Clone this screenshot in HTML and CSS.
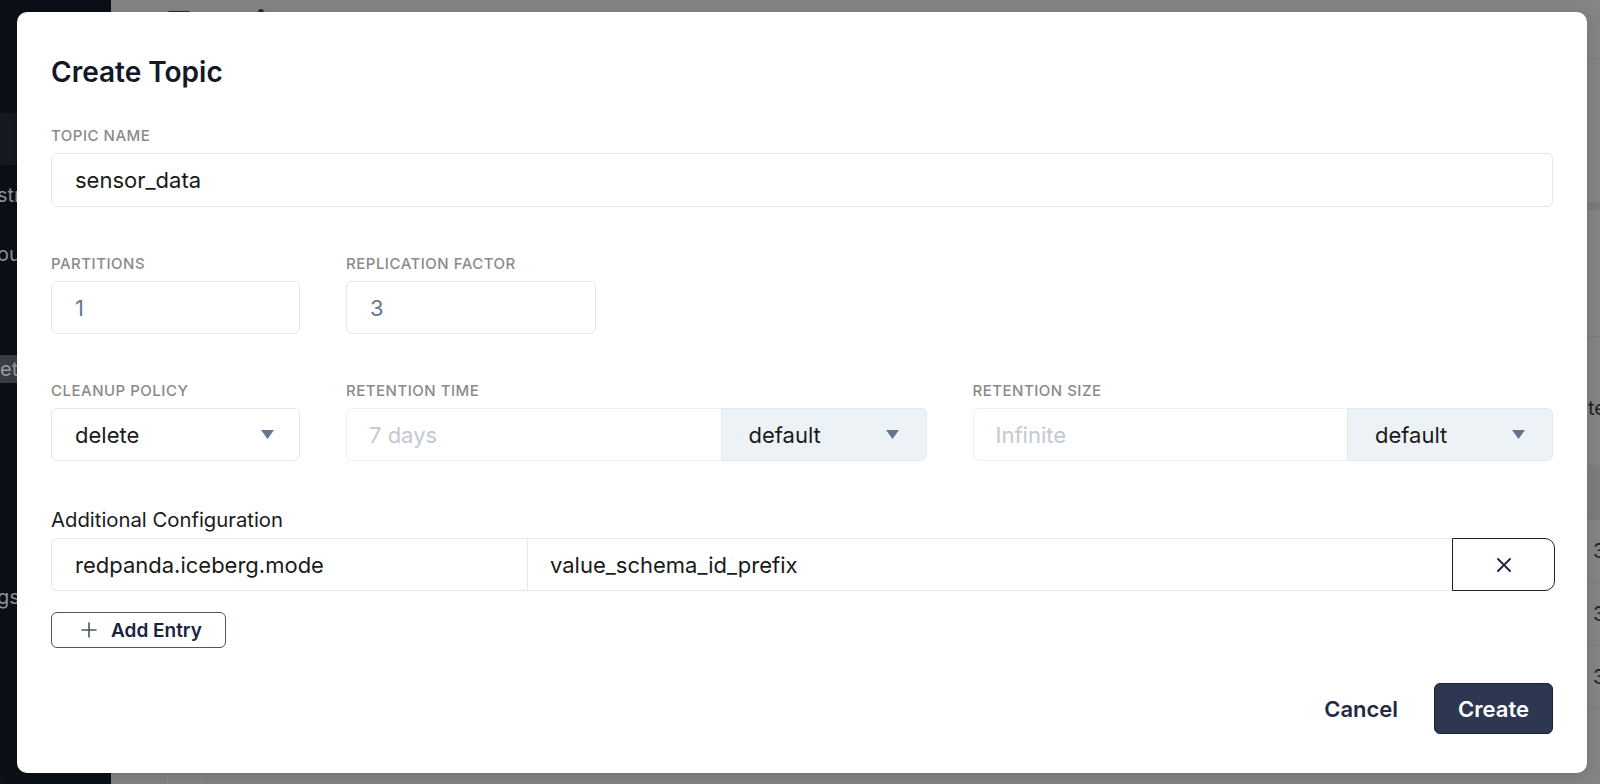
FILE: index.html
```html
<!DOCTYPE html>
<html lang="en">
<head>
    <meta charset="UTF-8">
    <meta name="viewport" content="width=device-width, initial-scale=1.0">
    <title>Create Topic</title>
    <link rel="stylesheet" href="styles.css">
</head>
<body>
    <div class="app">
        <aside class="sidebar">
            <div class="side-band"></div>
            <div class="side-item item-1">str</div>
            <div class="side-item item-2">ou</div>
            <div class="side-item item-3 active">et</div>
            <div class="side-item item-4">gs</div>
        </aside>
        <main class="main">
            <div class="topbar"><h1 class="page-title">Topics</h1></div>
            <div class="toolbar"></div>
            <div class="band"></div>
            <div class="stats"></div>
            <div class="search-row"><span class="edge-text">te</span></div>
            <div class="table-head"></div>
            <div class="table-row"><span class="edge-text">3</span></div>
            <div class="table-row"><span class="edge-text">3</span></div>
            <div class="table-row"><span class="edge-text">3</span></div>
            <div class="table-foot">
                <div class="col-line"></div>
                <div class="col-line"></div>
            </div>
        </main>
    </div>

    <div class="modal">
        <h2 class="modal-title">Create Topic</h2>

        <div class="field">
            <label class="field-label">TOPIC NAME</label>
            <div class="input input-tall">sensor_data</div>
        </div>

        <div class="row row-two">
            <div class="field">
                <label class="field-label">PARTITIONS</label>
                <div class="input muted">1</div>
            </div>
            <div class="field">
                <label class="field-label">REPLICATION FACTOR</label>
                <div class="input muted">3</div>
            </div>
        </div>

        <div class="row row-three">
            <div class="field">
                <label class="field-label">CLEANUP POLICY</label>
                <div class="input select">
                    <span>delete</span>
                    <svg class="caret" width="13" height="9" viewBox="0 0 13 9"><path d="M0 0h13L6.5 9z" fill="#64748b"/></svg>
                </div>
            </div>
            <div class="field">
                <label class="field-label">RETENTION TIME</label>
                <div class="group">
                    <div class="input group-input placeholder">7 days</div>
                    <div class="addon">
                        <span>default</span>
                        <svg class="caret" width="13" height="9" viewBox="0 0 13 9"><path d="M0 0h13L6.5 9z" fill="#64748b"/></svg>
                    </div>
                </div>
            </div>
            <div class="field">
                <label class="field-label">RETENTION SIZE</label>
                <div class="group">
                    <div class="input group-input placeholder">Infinite</div>
                    <div class="addon">
                        <span>default</span>
                        <svg class="caret" width="13" height="9" viewBox="0 0 13 9"><path d="M0 0h13L6.5 9z" fill="#64748b"/></svg>
                    </div>
                </div>
            </div>
        </div>

        <div class="field">
            <label class="config-label">Additional Configuration</label>
            <div class="config-row">
                <div class="input config-key">redpanda.iceberg.mode</div>
                <div class="input config-value">value_schema_id_prefix</div>
                <button class="remove-btn">
                    <svg width="14" height="14" viewBox="0 0 14 14"><path d="M1 1l12 12M13 1L1 13" stroke="#1a2340" stroke-width="1.8" stroke-linecap="round"/></svg>
                </button>
            </div>
        </div>

        <button class="add-btn">
            <svg width="16" height="16" viewBox="0 0 16 16"><path d="M8 1v14M1 8h14" stroke="#4a5568" stroke-width="1.6" stroke-linecap="round"/></svg>
            <span>Add Entry</span>
        </button>

        <div class="modal-footer">
            <button class="cancel-btn">Cancel</button>
            <button class="create-btn">Create</button>
        </div>
    </div>
</body>
</html>
```

FILE: styles.css
```css
body {
    margin: 0;
    font-family: Inter, "Noto Sans", sans-serif;
    background-color: #858585;
    overflow: hidden;
}
.app {
    display: flex;
    height: 784px;
}
.sidebar {
    width: 111px;
    flex-shrink: 0;
    background-color: #0b0f17;
    padding-top: 113px;
    box-sizing: border-box;
    color: #8f949c;
    font-size: 20px;
}
.side-band {
    height: 52px;
    background-color: #151921;
}
.side-item {
    height: 28px;
    line-height: 28px;
    margin-left: -3px;
}
.item-1 { margin-top: 16px; }
.item-2 { margin-top: 31px; }
.item-3 { margin-top: 87px; }
.item-4 { margin-top: 200px; }
.side-item.active {
    background-color: #3a3e45;
    width: 19px;
    padding-left: 3px;
    color: #9a9ea5;
}
.main {
    flex: 1;
    min-width: 0;
    overflow: hidden;
}
.topbar {
    height: 58px;
    border-bottom: 1px solid #7b7b7b;
    padding-left: 56px;
}
.page-title {
    margin: 0;
    padding-top: 2px;
    font-size: 36px;
    font-weight: 600;
    color: #2a2a2a;
    letter-spacing: 8px;
}
.toolbar {
    height: 143px;
}
.band {
    height: 8px;
    background-color: #7c7c7c;
}
.stats {
    height: 126px;
    border-bottom: 1px solid #7b7b7b;
}
.search-row,
.table-row {
    white-space: nowrap;
    overflow: hidden;
    color: #222;
    font-size: 20px;
}
.search-row {
    height: 128px;
    line-height: 142px;
    padding-left: 1477px;
}
.table-head {
    height: 54px;
    background-color: #7e7e7e;
    border-bottom: 1px solid #7b7b7b;
}
.table-row {
    height: 62px;
    line-height: 62px;
    border-bottom: 1px solid #7b7b7b;
    padding-left: 1482px;
}
.table-foot {
    display: flex;
    height: 100px;
    padding-left: 56px;
    gap: 33px;
}
.col-line {
    width: 1px;
    background-color: #8f8f8f;
}

/* modal */
.modal {
    position: absolute;
    left: 17px;
    top: 12px;
    width: 1570px;
    box-sizing: border-box;
    padding: 43px 34px 39px 34px;
    background-color: #fff;
    border-radius: 10px;
    box-shadow: 0 4px 18px rgba(0,0,0,0.15);
}
.modal-title {
    margin: 0 0 37px 0;
    font-size: 28px;
    line-height: 34px;
    font-weight: 600;
    color: #111827;
}
.field {
    display: flex;
    flex-direction: column;
}
.field-label {
    font-size: 15px;
    line-height: 20px;
    font-weight: 500;
    letter-spacing: 0.5px;
    color: #8a8a8a;
    margin-bottom: 7px;
}
.config-label {
    font-size: 20.3px;
    line-height: 24px;
    color: #1a1a1a;
    margin-bottom: 6px;
}
.row {
    display: grid;
    column-gap: 46px;
    margin-top: 47px;
}
.row-two {
    grid-template-columns: 249px 250px;
}
.row-three {
    grid-template-columns: 249px 1fr 1fr;
    margin-bottom: 47px;
}
.input {
    height: 53px;
    box-sizing: border-box;
    border: 1px solid #e2e8f0;
    border-radius: 6px;
    padding: 0 23px;
    display: flex;
    align-items: center;
    font-size: 22px;
    color: #1a1a1a;
}
.input-tall {
    height: 54px;
}
.muted {
    color: #667792;
}
.placeholder {
    color: #c3c9d3;
}
.select {
    justify-content: space-between;
    padding-right: 25px;
}
.group {
    display: flex;
}
.group-input {
    flex: 1;
    border-color: #eef1f5;
    border-right: none;
    border-radius: 6px 0 0 6px;
    padding-left: 22px;
}
.addon {
    width: 206px;
    height: 53px;
    box-sizing: border-box;
    background-color: #edf2f7;
    border: 1px solid #e2e8f0;
    border-radius: 0 6px 6px 0;
    padding: 0 27px;
    display: flex;
    align-items: center;
    justify-content: space-between;
    font-size: 22px;
    color: #1a1a1a;
}
.config-row {
    display: flex;
    margin-right: -2px;
}
.config-key {
    width: 476px;
    border-radius: 6px 0 0 6px;
    border-right: none;
}
.config-value {
    flex: 1;
    border-radius: 0;
    border-right: none;
    padding-left: 22px;
}
.remove-btn {
    width: 103px;
    height: 53px;
    border: 1px solid #1a202c;
    border-radius: 0 10px 10px 0;
    background-color: #fff;
    display: flex;
    align-items: center;
    justify-content: center;
    padding: 0;
}
.add-btn {
    margin-top: 21px;
    width: 175px;
    height: 36px;
    box-sizing: border-box;
    border: 1px solid #4a5568;
    border-radius: 6px;
    background-color: #fff;
    display: flex;
    align-items: center;
    gap: 14px;
    padding: 0 0 0 29px;
    font-family: Inter, sans-serif;
    font-size: 19px;
    font-weight: 600;
    color: #1a2340;
}
.modal-footer {
    margin-top: 35px;
    display: flex;
    justify-content: flex-end;
    align-items: center;
    gap: 18px;
}
.cancel-btn,
.create-btn {
    height: 51px;
    border: none;
    border-radius: 6px;
    font-family: Inter, sans-serif;
    font-size: 22px;
    font-weight: 600;
    cursor: pointer;
}
.cancel-btn {
    background: none;
    color: #1f2a44;
    padding: 0 18px;
}
.create-btn {
    background-color: #2d3752;
    color: #fff;
    padding: 0 23px;
    border: 1px solid #1a2036;
}
```
